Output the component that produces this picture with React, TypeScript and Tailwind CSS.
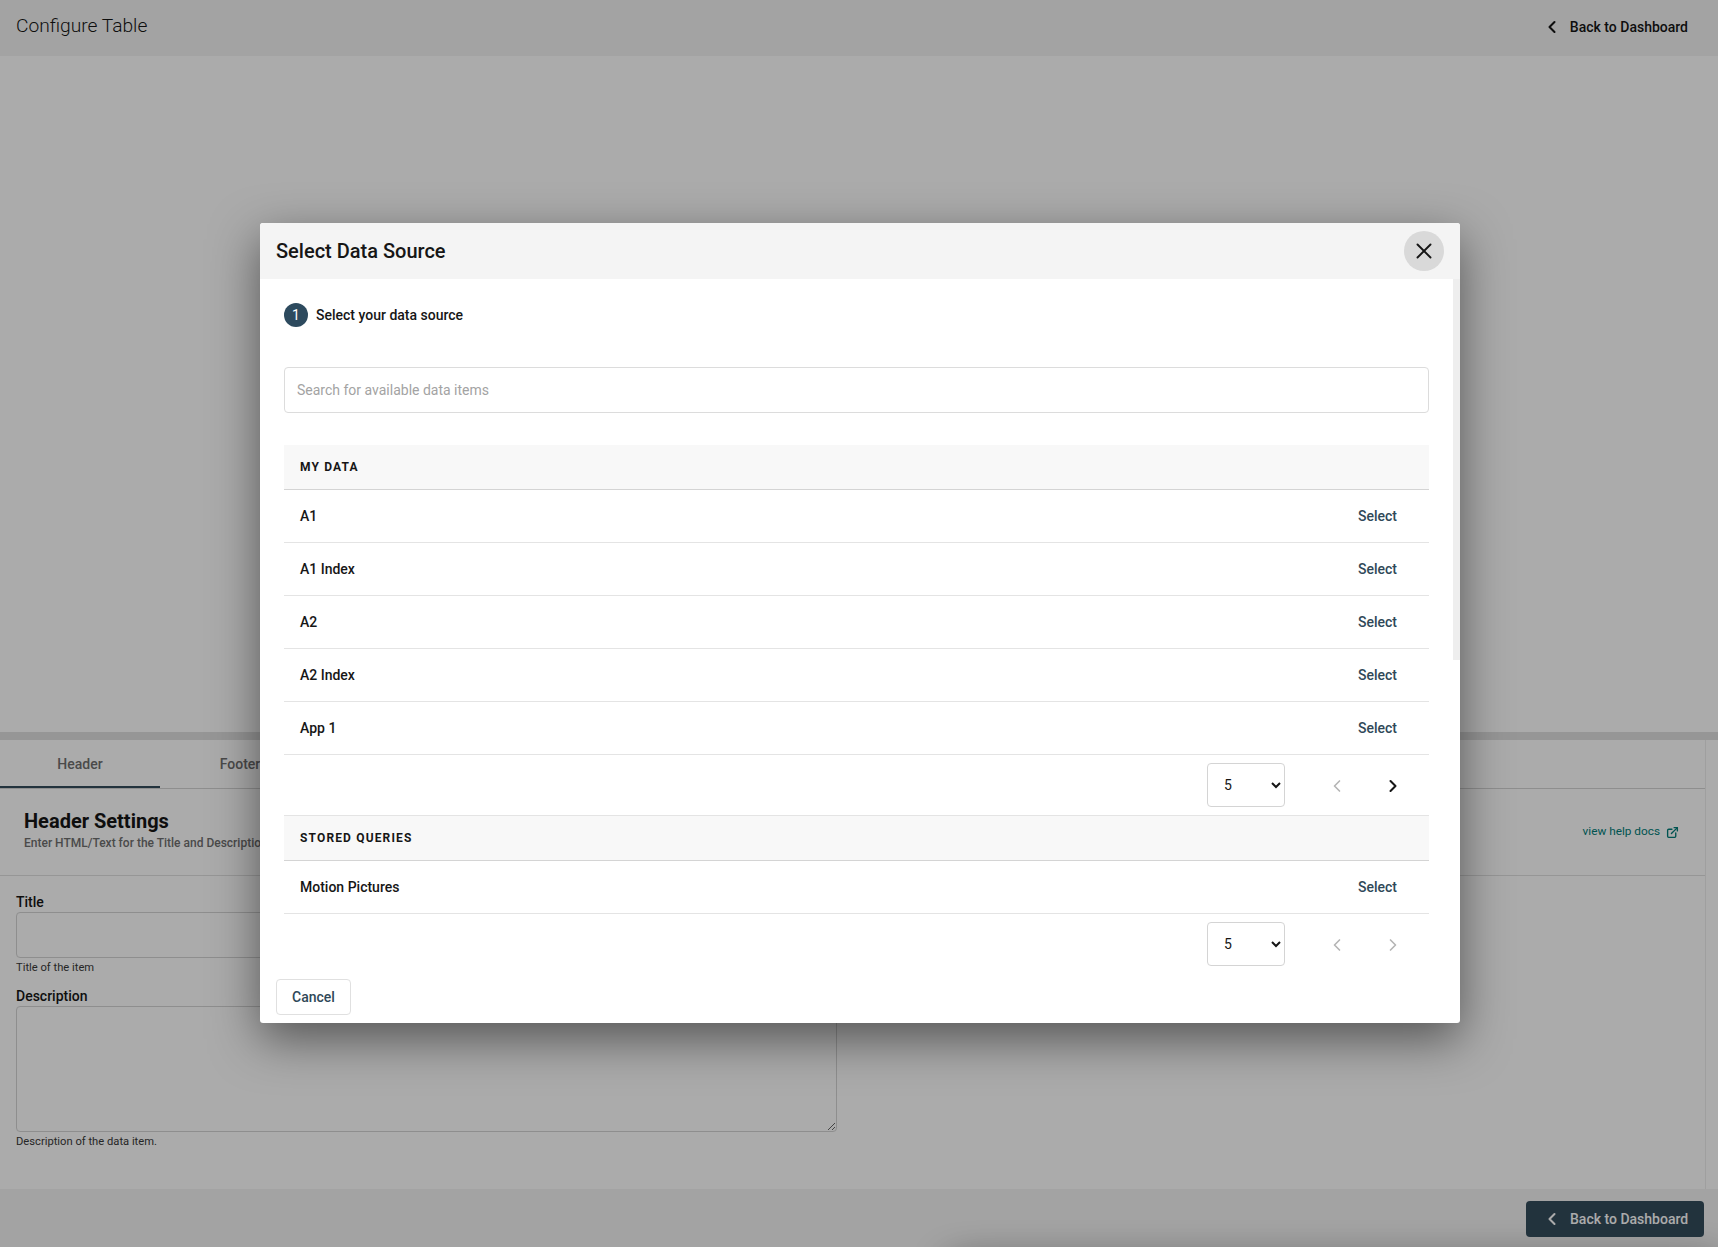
import React from "react";
import { ChevronLeft, ChevronRight, ExternalLink, X } from "lucide-react";

const myData = ["A1", "A1 Index", "A2", "A2 Index", "App 1"];

function DataRow({ name }: { name: string }) {
  return (
    <div className="flex h-[53px] items-center justify-between border-b border-[#e4e4e4] pl-4 pr-8">
      <span className="text-sm font-medium text-[#161616]">{name}</span>
      <span className="text-sm font-medium text-[#2f4858]">Select</span>
    </div>
  );
}

function SectionHeader({ title }: { title: string }) {
  return (
    <div className="flex h-[45px] items-center border-b border-[#d4d4d4] bg-[#f8f8f8] pl-4 text-xs font-bold tracking-[1.15px] text-[#161616]">
      {title}
    </div>
  );
}

function Pagination({ nextEnabled, last }: { nextEnabled: boolean; last?: boolean }) {
  return (
    <div className={`flex items-center justify-end pr-[26px] ${last ? "h-[60px]" : "h-[61px] border-b border-[#e4e4e4]"}`}>
      <select
        defaultValue="5"
        className="h-11 w-[78px] rounded border border-[#d4d4d4] bg-white pl-3 text-sm text-[#161616]"
      >
        <option value="5">5</option>
        <option value="10">10</option>
      </select>
      <ChevronLeft size={20} strokeWidth={2} className="ml-[42px] mt-0.5 text-[#b5b5b5]" />
      <ChevronRight
        size={20}
        strokeWidth={nextEnabled ? 2.5 : 2}
        className={`ml-9 mt-0.5 ${nextEnabled ? "text-[#161616]" : "text-[#b5b5b5]"}`}
      />
    </div>
  );
}

function BackLabel() {
  return (
    <>
      <ChevronLeft size={20} strokeWidth={2.5} />
      <span className="ml-2 text-sm font-medium">Back to Dashboard</span>
    </>
  );
}

export default function App() {
  return (
    <div className="relative h-[1247px] w-full overflow-hidden bg-white font-['Roboto',sans-serif] text-[#161616]">
      {/* page behind the dialog */}
      <div className="flex h-full flex-col">
        <header className="flex h-14 shrink-0 items-center justify-between bg-[#f4f4f4] pb-[3px] pl-4 pr-[30px]">
          <h1 className="text-[19.2px] font-light">Configure Table</h1>
          <div className="flex items-center">
            <BackLabel />
          </div>
        </header>

        <div className="flex-1" />
        <div className="h-2 shrink-0 bg-[#e0e0e0]" />

        <section className="mr-3 h-[449px] shrink-0 border-r border-[#eeeeee]">
          <div className="flex h-[49px] border-b border-[#d4d4d4] text-sm font-medium text-[#6f6f6f]">
            <div className="flex w-40 items-center justify-center border-b-2 border-[#334c5c] pt-[2px]">Header</div>
            <div className="flex w-40 items-center justify-center">Footer</div>
          </div>
          <div className="flex h-[87px] items-center justify-between border-b border-[#e0e0e0] pl-6 pr-[26px]">
            <div className="mb-[6px]">
              <h2 className="text-xl leading-[26px] font-bold">Header Settings</h2>
              <p className="mt-px text-xs font-medium text-[#6f6f6f]">Enter HTML/Text for the Title and Description</p>
            </div>
            <a className="flex items-center gap-[6px] text-[11.8px] text-[#007d79]">
              view help docs
              <ExternalLink size={13} strokeWidth={2.5} />
            </a>
          </div>
          <div className="box-content w-[821px] pl-4 pt-[17px]">
            <label className="block text-sm leading-[19px] font-medium">Title</label>
            <input className="block h-[46px] w-[821px] rounded border border-[#d4d4d4]" />
            <p className="mt-[3px] text-[11.2px] leading-[13px] text-[#393939]">Title of the item</p>
            <label className="mt-3 block text-sm leading-5 font-medium">Description</label>
            <textarea className="block h-[126px] w-[821px] rounded border border-[#d4d4d4]" />
            <p className="mt-[3px] text-[11.2px] leading-[13px] text-[#393939]">Description of the data item.</p>
          </div>
        </section>

        <footer className="relative flex h-[58px] shrink-0 items-center justify-end bg-[#f4f4f4] pr-[14px] pt-[2px]">
          {/* shadow of something just below the fold */}
          <div className="absolute -bottom-[38px] left-[950px] right-0 h-5 shadow-[0_0_40px_rgba(0,0,0,0.7)]" />
          <button className="relative flex h-9 w-[178px] items-center rounded bg-[#334c5c] pl-4 text-white">
            <BackLabel />
          </button>
        </footer>
      </div>

      {/* overlay */}
      <div className="absolute inset-0 bg-black/[0.33]" />

      {/* dialog */}
      <div className="absolute left-[260px] top-[223px] flex h-[800px] w-[1200px] flex-col overflow-hidden rounded-[3px] bg-white shadow-[0_16px_48px_rgba(0,0,0,0.5)]">
        <div className="flex h-14 shrink-0 items-center justify-between bg-[#f4f4f4] pl-4 pr-4">
          <h3 className="text-xl font-medium">Select Data Source</h3>
          <button className="flex h-10 w-10 items-center justify-center rounded-full bg-[#d9d9d9]">
            <X size={26} strokeWidth={1.75} />
          </button>
        </div>

        <div className="relative flex-1 overflow-hidden pl-6 pr-[31px] pt-6">
          <div className="flex items-center">
            <span className="flex h-6 w-6 items-center justify-center rounded-full bg-[#2d4a5e] text-sm text-white">1</span>
            <span className="ml-2 text-sm font-medium">Select your data source</span>
          </div>
          <input
            placeholder="Search for available data items"
            className="mt-10 block h-[46px] w-full rounded border border-[#dcdcdc] px-3 text-sm placeholder:text-[#a3a3a3]"
          />
          <div className="mt-8">
            <SectionHeader title="MY DATA" />
            {myData.map((name) => (
              <DataRow key={name} name={name} />
            ))}
            <Pagination nextEnabled />
            <SectionHeader title="STORED QUERIES" />
            <DataRow name="Motion Pictures" />
            <Pagination nextEnabled={false} last />
          </div>
          {/* scrollbar thumb */}
          <div className="absolute right-0 top-0 h-[381px] w-[7px] bg-[#eeeeee]" />
        </div>

        <div className="flex h-[52px] shrink-0 items-center pl-4">
          <button className="h-9 w-[75px] rounded border border-[#e0e0e0] bg-white text-sm font-medium text-[#2f4858]">
            Cancel
          </button>
        </div>
      </div>
    </div>
  );
}
